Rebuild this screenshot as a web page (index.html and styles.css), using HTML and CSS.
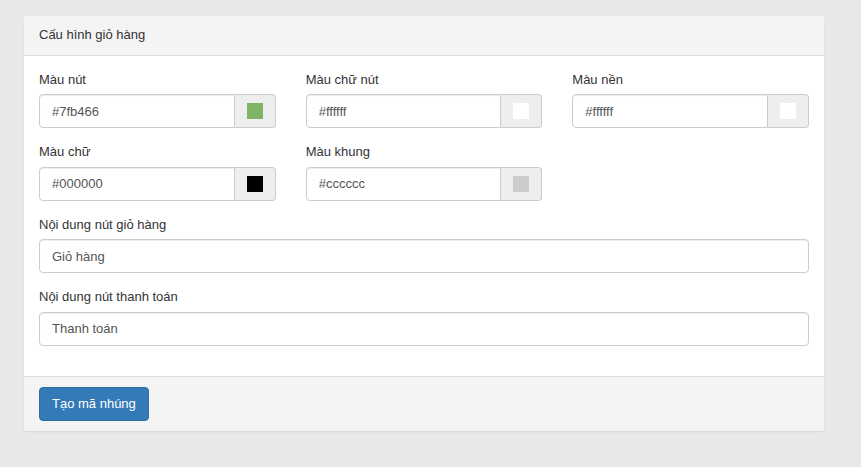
FILE: index.html
```html
<!DOCTYPE html>
<html lang="vi">
<head>
    <meta charset="UTF-8">
    <title>Cấu hình giỏ hàng</title>
    <link rel="stylesheet" href="styles.css">
</head>
<body>
    <div class="panel">
        <div class="panel-heading">Cấu hình giỏ hàng</div>

        <div class="panel-body">
            <div class="row">
                <div class="col">
                    <label>Màu nút</label>
                    <div class="input-group">
                        <input type="text" class="form-control" value="#7fb466">
                        <span class="addon"><i class="swatch" style="background: #7fb466;"></i></span>
                    </div>
                </div>
                <div class="col">
                    <label>Màu chữ nút</label>
                    <div class="input-group">
                        <input type="text" class="form-control" value="#ffffff">
                        <span class="addon"><i class="swatch" style="background: #ffffff;"></i></span>
                    </div>
                </div>
                <div class="col">
                    <label>Màu nền</label>
                    <div class="input-group">
                        <input type="text" class="form-control" value="#ffffff">
                        <span class="addon"><i class="swatch" style="background: #ffffff;"></i></span>
                    </div>
                </div>
                <div class="col">
                    <label>Màu chữ</label>
                    <div class="input-group">
                        <input type="text" class="form-control" value="#000000">
                        <span class="addon"><i class="swatch" style="background: #000000;"></i></span>
                    </div>
                </div>
                <div class="col">
                    <label>Màu khung</label>
                    <div class="input-group">
                        <input type="text" class="form-control" value="#cccccc">
                        <span class="addon"><i class="swatch" style="background: #cccccc;"></i></span>
                    </div>
                </div>
            </div>

            <div class="form-group">
                <label>Nội dung nút giỏ hàng</label>
                <input type="text" class="form-control" value="Giỏ hàng">
            </div>

            <div class="form-group">
                <label>Nội dung nút thanh toán</label>
                <input type="text" class="form-control" value="Thanh toán">
            </div>
        </div>

        <div class="panel-footer">
            <button class="btn">Tạo mã nhúng</button>
        </div>
    </div>
</body>
</html>
```

FILE: styles.css
```css
* {
    margin: 0;
    padding: 0;
    box-sizing: border-box;
}

body {
    font-family: "Liberation Sans", Arial, sans-serif;
    font-size: 13px;
    line-height: 1.42857;
    color: #333;
    background-color: #e7e8ea;
    padding: 16px 24px;
}

.panel {
    width: 800px;
    background: white;
    border-radius: 4px;
    box-shadow: 0 1px 2px rgba(0, 0, 0, 0.08);
    overflow: hidden;
}

.panel-heading {
    background-color: #f4f4f4;
    border-bottom: 1px solid #dddddd;
    padding: 10px 15px;
    height: 40px;
}

.panel-body {
    padding: 14.5px 15px 15px;
}

.row {
    display: flex;
    flex-wrap: wrap;
    margin: 0 -15px;
}

.col {
    width: 33.3333%;
    padding: 0 15px;
    margin-bottom: 15px;
}

label {
    display: block;
    margin-bottom: 5px;
}

.form-group {
    margin-bottom: 15px;
}

.input-group {
    display: flex;
}

.form-control {
    display: block;
    width: 100%;
    height: 34px;
    padding: 6px 12px;
    font-family: inherit;
    font-size: 13px;
    color: #555;
    background: white;
    border: 1px solid #cccccc;
    border-radius: 4px;
    box-shadow: inset 0 1px 1px rgba(0, 0, 0, 0.075);
    outline: none;
}

.input-group .form-control {
    flex: 1;
    min-width: 0;
    border-radius: 4px 0 0 4px;
}

.addon {
    width: 41px;
    height: 34px;
    display: flex;
    align-items: center;
    justify-content: center;
    background-color: #eeeeee;
    border: 1px solid #cccccc;
    border-left: none;
    border-radius: 0 4px 4px 0;
}

.swatch {
    display: block;
    width: 16px;
    height: 16px;
}

.panel-footer {
    background-color: #f4f4f4;
    border-top: 1px solid #dddddd;
    padding: 10px 15px;
    height: 55px;
}

.btn {
    height: 34px;
    padding: 6px 12px;
    font-family: inherit;
    font-size: 13px;
    color: white;
    background-color: #337ab7;
    border: 1px solid #2e6da4;
    border-radius: 4px;
    cursor: pointer;
}
```
